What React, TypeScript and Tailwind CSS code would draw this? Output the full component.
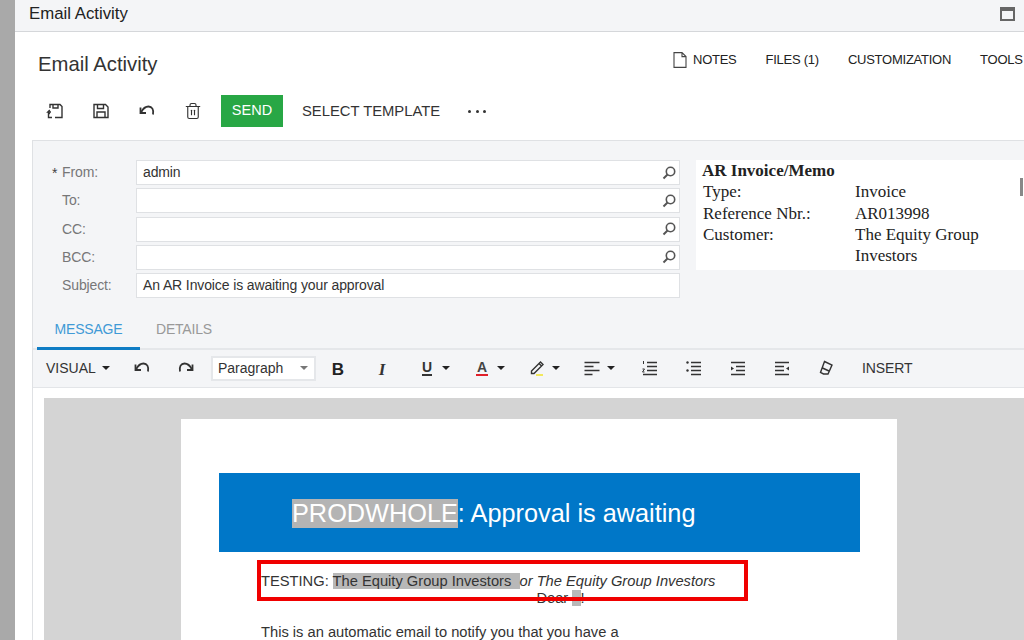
import { ReactNode } from "react";
import { Trash2 } from "lucide-react";

const fields = [
  { label: "From:", value: "admin", search: true, required: true },
  { label: "To:", value: "", search: true },
  { label: "CC:", value: "", search: true },
  { label: "BCC:", value: "", search: true },
  { label: "Subject:", value: "An AR Invoice is awaiting your approval", search: false },
];

function Caret() {
  return <span className="block w-0 h-0 border-x-[4px] border-x-transparent border-t-[4px] border-t-[#222]" />;
}

function Icon({ children, className }: { children: ReactNode; className?: string }) {
  return (
    <svg width="18" height="18" viewBox="0 0 18 18" fill="none" stroke="#333" strokeWidth="1.4" className={className}>
      {children}
    </svg>
  );
}

// curved arrow, mirrored for redo
function UndoIcon({ flip }: { flip?: boolean }) {
  return (
    <svg width="18" height="18" viewBox="0 0 18 18" fill="none" stroke="#333" strokeWidth="1.8" className={flip ? "-scale-x-100" : ""}>
      <path d="M2.500 5.500v5.500H8" />
      <path d="M3 10.500C5 6.500 7.500 4.500 10.500 4.500c3.500 0 5.500 3 4.500 8" />
    </svg>
  );
}

function SearchIcon() {
  return (
    <svg width="16" height="16" viewBox="0 0 16 16" fill="none" stroke="#555" strokeWidth="1.6">
      <circle cx="9.500" cy="6.500" r="4.200" />
      <path d="M6.500 9.500 2.500 13.500" strokeWidth="2" />
    </svg>
  );
}

function ToolBtn({ children }: { children: ReactNode }) {
  return <div className="w-[44px] h-full flex items-center justify-center">{children}</div>;
}

function CaretBtn({ children }: { children: ReactNode }) {
  return (
    <div className="w-[55px] h-full flex items-center pl-[14px] gap-[6px]">
      <div className="w-[18px] flex justify-center">{children}</div>
      <Caret />
    </div>
  );
}

function Main() {
  return (
    <div className="flex-1 flex flex-col min-w-0">
      {/* title bar */}
      <div className="h-[32px] shrink-0 bg-[#f4f5f7] border-b border-[#d5d7da] flex items-center pl-[14px] pr-[9px] pb-[4px] justify-between">
        <span className="text-[16.800px] text-[#222]">Email Activity</span>
        <span className="block w-[15px] h-[14px] border-2 border-t-[4px] border-[#666]" />
      </div>

      <div className="flex-1 pl-[17px] flex flex-col min-h-0">
        {/* heading */}
        <div className="h-[63px] shrink-0 flex items-start">
          <h1 className="pl-[6px] pt-[19px] text-[20.300px] leading-[26px] text-[#333] w-[641px] shrink-0">Email Activity</h1>
          <div className="flex-1 flex items-center gap-[29px] pt-[19px] text-[13px] tracking-[-0.25px] leading-[18px] text-[#222] whitespace-nowrap">
            <span className="flex items-center gap-[6px]">
              <svg width="14" height="16" viewBox="0 0 14 16" fill="none" stroke="#444" strokeWidth="1.1">
                <path d="M1 .6h8l4 4v10.800H1zM9 .6v4h4" />
              </svg>
              NOTES
            </span>
            <span>FILES (1)</span>
            <span>CUSTOMIZATION</span>
            <span>TOOLS</span>
          </div>
        </div>

        {/* actions */}
        <div className="h-[32px] shrink-0 flex items-center text-[#333]">
          <div className="w-[46px] flex justify-center">
            <Icon>
              <path d="M4 6V2.500h10l2 2V15.500H9M7 2.500V6h5V2.500M5 10H1.800l2-2M1.800 10l2 2M2.500 10v5.500H6" />
            </Icon>
          </div>
          <div className="w-[46px] flex justify-center">
            <Icon>
              <path d="M2 2.500h11.500l2.500 2.500v10.500H2zM5.500 2.500v4h6v-4M5 15.500v-5.500h8v5.500" />
            </Icon>
          </div>
          <div className="w-[46px] flex justify-center">
            <UndoIcon />
          </div>
          <div className="w-[46px] flex justify-center">
            <Trash2 size={18} strokeWidth={1.5} color="#333" />
          </div>
          <button className="ml-[5px] w-[62px] h-[32px] bg-[#28a745] text-white text-[14.500px]">SEND</button>
          <span className="ml-[19px] text-[14.800px] leading-[20px] whitespace-nowrap">SELECT TEMPLATE</span>
          <span className="ml-[28px] flex gap-[4.500px]">
            <i className="block w-[3px] h-[3px] rounded-full bg-[#333]" />
            <i className="block w-[3px] h-[3px] rounded-full bg-[#333]" />
            <i className="block w-[3px] h-[3px] rounded-full bg-[#333]" />
          </span>
        </div>

        {/* panel */}
        <div className="mt-[13px] flex-1 flex flex-col min-h-0 border-l border-t border-[#dfe1e4] bg-[#f4f5f7]">
          <div className="h-[170px] shrink-0 pt-[19px] flex">
            <div className="w-[647px] shrink-0 flex flex-col gap-[3.250px]">
              {fields.map((f) => (
                <div key={f.label} className="flex items-center h-[25px] tracking-[-0.12px]">
                  <div className="w-[103px] shrink-0 relative pl-[29px] text-[14px] text-[#777]">
                    {f.required && <span className="absolute left-[19px] top-[1px] text-[#444]">*</span>}
                    {f.label}
                  </div>
                  <div className="flex-1 h-full bg-white border border-[#dfe1e4] flex items-center justify-between pl-[6px] pr-[2px] text-[14px] text-[#333]">
                    <span>{f.value}</span>
                    {f.search && <SearchIcon />}
                  </div>
                </div>
              ))}
            </div>
            <div
              className="relative ml-[16px] flex-1 h-[110px] bg-white pl-[6px] text-[17px] leading-[21.300px] text-[#222]"
              style={{ fontFamily: '"Liberation Serif", serif' }}
            >
              <div className="font-bold">AR Invoice/Memo</div>
              <div className="grid grid-cols-[152px_1fr] pl-[1px] pr-[30px]">
                <span>Type:</span>
                <span>Invoice</span>
                <span>Reference Nbr.:</span>
                <span>AR013998</span>
                <span>Customer:</span>
                <span>The Equity Group Investors</span>
              </div>
              <span className="absolute right-[1px] top-[18px] w-[3px] h-[18px] bg-[#888]" />
            </div>
          </div>

          {/* tabs */}
          <div className="h-[39px] shrink-0 flex items-end border-b-2 border-[#e5e7ea] text-[14px] tracking-[-0.2px]">
            <div className="ml-[4px] w-[103px] -mb-[2px] h-[37px] border-b-[3px] border-[#0f7cc4] flex items-start justify-center pt-[6px] text-[#3f9ad6]">
              MESSAGE
            </div>
            <div className="ml-[16px] h-[35px] pt-[6px] text-[#999]">DETAILS</div>
          </div>

          {/* editor toolbar */}
          <div className="h-[38px] shrink-0 flex items-center border-b border-[#e3e5e8] pb-[1px] text-[14px] leading-none text-[#333]">
            <div className="w-[87px] shrink-0 flex items-center pl-[13px] gap-[6px]">
              <span>VISUAL</span>
              <Caret />
            </div>
            <ToolBtn>
              <UndoIcon />
            </ToolBtn>
            <ToolBtn>
              <UndoIcon flip />
            </ToolBtn>
            <div className="ml-[3px] w-[105px] shrink-0 h-[25px] bg-white border-2 border-[#e5e7ea] flex items-center justify-between pl-[5px] pr-[6px]">
              <span>Paragraph</span>
              <span className="block w-0 h-0 border-x-[4px] border-x-transparent border-t-[4px] border-t-[#777]" />
            </div>
            <ToolBtn>
              <span className="text-[17px] font-bold text-[#222] pt-[3px]">B</span>
            </ToolBtn>
            <ToolBtn>
              <span className="text-[17px] font-bold italic text-[#333] pt-[3px]" style={{ fontFamily: '"Liberation Serif", serif' }}>
                I
              </span>
            </ToolBtn>
            <CaretBtn>
              <span className="text-[14px] font-bold text-[#333] border-b-2 border-[#333] leading-[13px]">U</span>
            </CaretBtn>
            <CaretBtn>
              <span className="text-[14px] font-bold text-[#444] border-b-2 border-[#e0202a] leading-[13px] px-[1px]">A</span>
            </CaretBtn>
            <CaretBtn>
              <Icon>
                <path d="M3.500 12 12.500 3l2.500 2.500-9 9H3.500zM11 4.500l2.500 2.500" />
                <path d="M8 16h7" stroke="#f2e85c" strokeWidth="2" />
              </Icon>
            </CaretBtn>
            <CaretBtn>
              <Icon>
                <path d="M1.500 3.500h15M1.500 7.500h9M1.500 11.500h15M1.500 15.500h8" />
              </Icon>
            </CaretBtn>
            <div className="w-[4px] shrink-0" />
            <ToolBtn>
              <Icon>
                <path d="M6 3.500h10M6 7.500h10M6 11.500h10M2 15.500h14" />
                <path d="M2.500 2v3M1.500 10h2l-2 3h2" strokeWidth="1" />
              </Icon>
            </ToolBtn>
            <ToolBtn>
              <Icon>
                <path d="M6 3.500h10M6 7.500h10M6 11.500h10M6 15.500h10" />
                <circle cx="2.500" cy="3.500" r="1.200" fill="#333" stroke="none" />
                <circle cx="2.500" cy="11.500" r="1.200" fill="#333" stroke="none" />
              </Icon>
            </ToolBtn>
            <ToolBtn>
              <Icon>
                <path d="M2 3.500h14M7 7.500h9M7 11.500h9M2 15.500h14" />
                <path d="M2 7.500l3 2-3 2z" fill="#333" stroke="none" />
              </Icon>
            </ToolBtn>
            <ToolBtn>
              <Icon>
                <path d="M2 3.500h14M2 7.500h9M2 11.500h9M2 15.500h14" />
                <path d="M16 7.500l-3 2 3 2z" fill="#333" stroke="none" />
              </Icon>
            </ToolBtn>
            <ToolBtn>
              <Icon>
                <path d="M7.500 2.500 15 6l-4 9H6.500L3.500 13.500zM5.500 9l6.500 3" />
              </Icon>
            </ToolBtn>
            <span className="ml-[14px] tracking-[-0.1px]">INSERT</span>
          </div>

          {/* email body */}
          <div className="flex-1 min-h-0 bg-white pt-[10px] pl-[11px]">
            <div className="h-full bg-[#d4d4d4] pt-[21px] pl-[137px] overflow-hidden">
              <div className="w-[716px] h-[300px] bg-white pt-[54px] pl-[38px]">
                <div className="w-[641px] h-[79px] bg-[#0077c8] pl-[73px] pt-[1px] flex items-center text-[25.300px] leading-[29px] text-white">
                  <span className="bg-[#b4b4b4]">PRODWHOLE</span>
                  <span className="whitespace-pre">: Approval is awaiting</span>
                </div>
                <div className="w-[641px] pl-[42px] text-[14.700px] text-[#333]">
                  <div className="mt-[21px] leading-[17px] whitespace-pre">
                    TESTING: <span className="bg-[#b8b8b8]">The Equity Group Investors  </span>
                    <i>or The Equity Group Investors</i>
                  </div>
                  <div className="text-center leading-[17px]">
                    Dear <span className="bg-[#b8b8b8]">&nbsp;&nbsp;</span>!
                  </div>
                  <div className="mt-[17px] leading-[17px]">This is an automatic email to notify you that you have a</div>
                </div>
              </div>
            </div>
          </div>
        </div>
      </div>
    </div>
  );
}

export default function App() {
  return (
    <div
      className="relative w-[1024px] h-[640px] overflow-hidden flex bg-white"
      style={{ fontFamily: '"Liberation Sans", Arial, sans-serif' }}
    >
      <div className="w-[15px] shrink-0 bg-[#a9a9a9]" />
      <Main />
      {/* red annotation */}
      <div className="absolute left-[257px] top-[560px] w-[491px] h-[41px] border-[4px] border-[#f00000]" />
    </div>
  );
}
